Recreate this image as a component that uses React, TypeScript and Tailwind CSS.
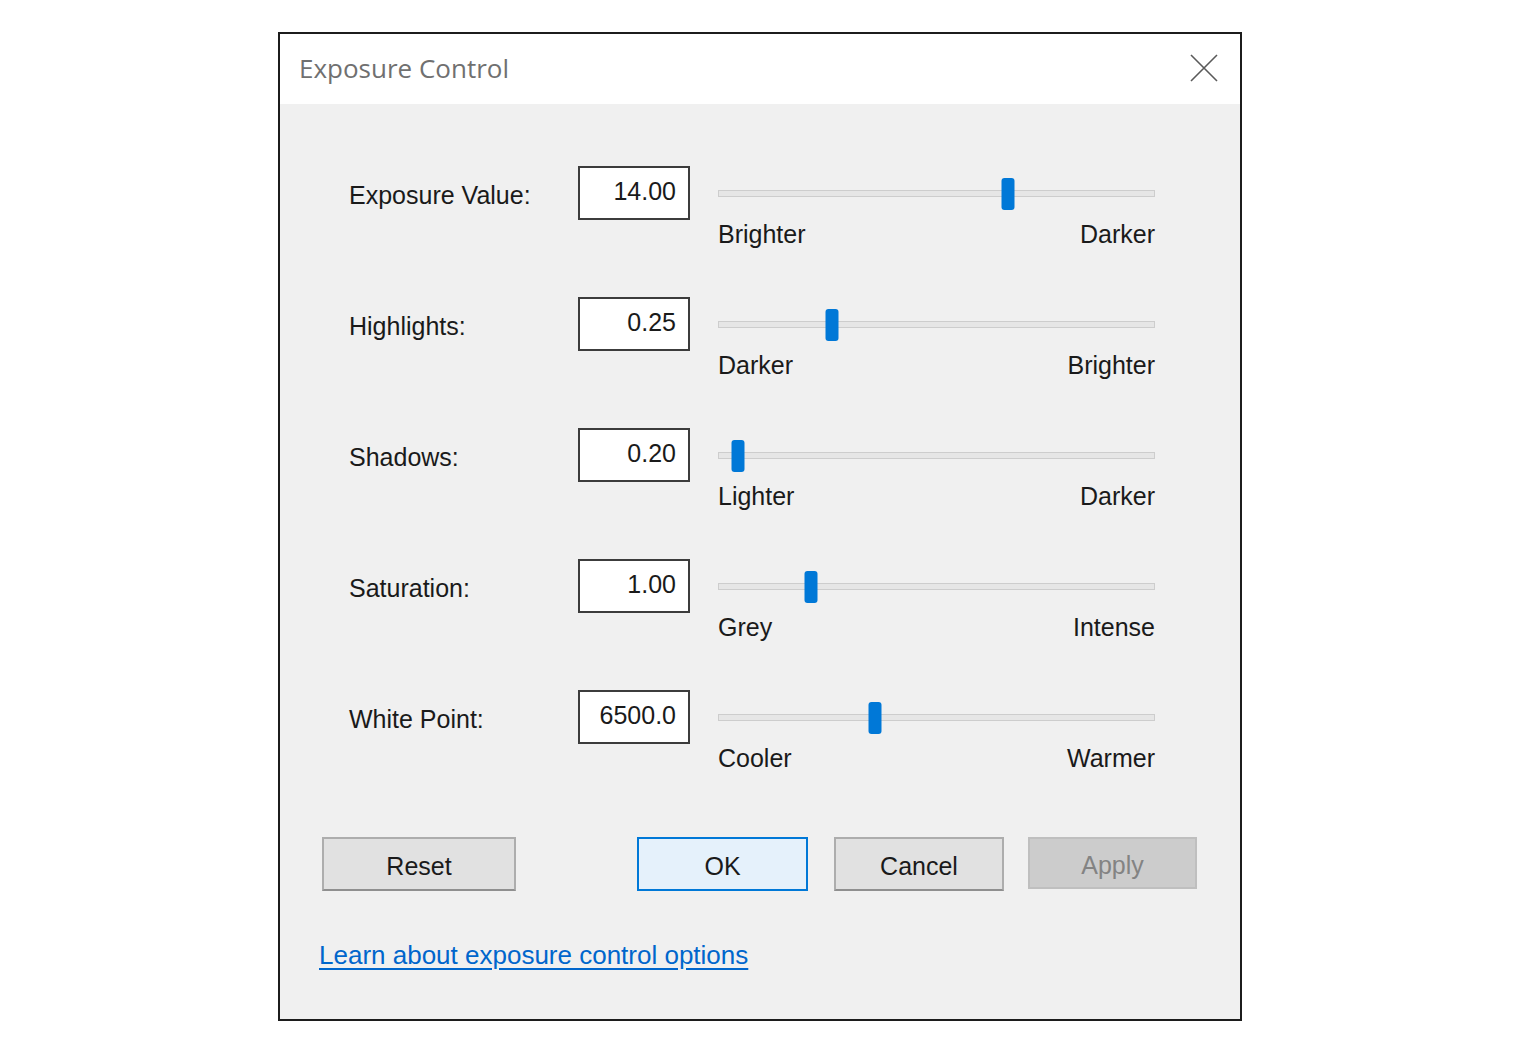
import React from 'react';

type Row = {
    label: string;
    value: string;
    pos: number;
    left: string;
    right: string;
};

const rows: Row[] = [
    { label: 'Exposure Value:', value: '14.00', pos: 66.4, left: 'Brighter', right: 'Darker' },
    { label: 'Highlights:', value: '0.25', pos: 26.1, left: 'Darker', right: 'Brighter' },
    { label: 'Shadows:', value: '0.20', pos: 4.6, left: 'Lighter', right: 'Darker' },
    { label: 'Saturation:', value: '1.00', pos: 21.3, left: 'Grey', right: 'Intense' },
    { label: 'White Point:', value: '6500.0', pos: 35.9, left: 'Cooler', right: 'Warmer' },
];

const font = { fontFamily: '"Liberation Sans", Arial, sans-serif' };

const Slider = ({ row }: { row: Row }) => {
    return (
        <div className="w-[437px]">
            <div className="relative h-[54px] flex items-center">
                <div className="w-full h-[7px] bg-[#e6e6e6] border border-[#cdcdcd]" />
                {/* thumb */}
                <div
                    className="absolute top-[12px] w-[13px] h-[32px] bg-[#0078d7] rounded-[3px] -translate-x-1/2"
                    style={{ left: `${row.pos}%` }}
                />
            </div>
            <div className="flex justify-between leading-[28px] text-[25px] text-[#1a1a1a]">
                <span>{row.left}</span>
                <span>{row.right}</span>
            </div>
        </div>
    );
};

const App = () => {
    return (
        <div className="w-[1520px] h-[1053px] bg-white pt-[32px] pl-[278px]" style={font}>
            <div className="w-[964px] h-[989px] border-2 border-[#1c1c1c] bg-[#f0f0f0] flex flex-col">
                {/* title bar */}
                <div className="h-[70px] bg-white flex items-center justify-between pl-[19px] pr-[22px]">
                    <span
                        className="text-[26px] text-[#707070] mt-[-2px]"
                        style={{ fontFamily: '"Open Sans", "Noto Sans", sans-serif' }}
                    >
                        Exposure Control
                    </span>
                    <svg width="28" height="28" viewBox="0 0 28 28" className="mt-[-2px]">
                        <path d="M1 1 L27 27 M27 1 L1 27" stroke="#5a5a5a" strokeWidth="1.6" fill="none" />
                    </svg>
                </div>

                {/* rows */}
                <div className="pt-[62px] pl-[69px] flex flex-col">
                    {rows.map((row) => (
                        <div key={row.label} className="h-[131px] flex items-start">
                            <div className="w-[229px] h-[54px] flex items-center pt-[6px] text-[25px] text-[#1a1a1a]">
                                {row.label}
                            </div>
                            <div className="w-[112px] h-[54px] bg-white border-2 border-[#3c3c3c] flex items-center justify-end pr-[12px] pb-[3px] text-[25px] text-[#1a1a1a]">
                                {row.value}
                            </div>
                            <div className="ml-[28px]">
                                <Slider row={row} />
                            </div>
                        </div>
                    ))}
                </div>

                {/* buttons */}
                <div className="mt-[16px] pl-[42px] flex items-start text-[25px]">
                    <button className="w-[194px] h-[54px] pt-[6px] bg-[#e1e1e1] border-2 border-[#adadad] border-b-[#8f8f8f] text-[#1a1a1a]">
                        Reset
                    </button>
                    <button className="ml-[121px] w-[171px] h-[54px] pt-[6px] bg-[#e5f1fb] border-2 border-[#0078d7] text-[#1a1a1a]">
                        OK
                    </button>
                    <button className="ml-[26px] w-[170px] h-[54px] pt-[6px] bg-[#e1e1e1] border-2 border-[#adadad] border-b-[#8f8f8f] text-[#1a1a1a]">
                        Cancel
                    </button>
                    <button className="ml-[24px] w-[169px] h-[52px] pt-[6px] bg-[#cccccc] border-2 border-[#bfbfbf] text-[#838383]" disabled>
                        Apply
                    </button>
                </div>

                {/* link */}
                <div className="mt-[49px] pl-[39px] leading-[30px]">
                    <a href="#" className="text-[26px] text-[#0066cc] underline underline-offset-[4px]">
                        Learn about exposure control options
                    </a>
                </div>
            </div>
        </div>
    );
};

export default App;
